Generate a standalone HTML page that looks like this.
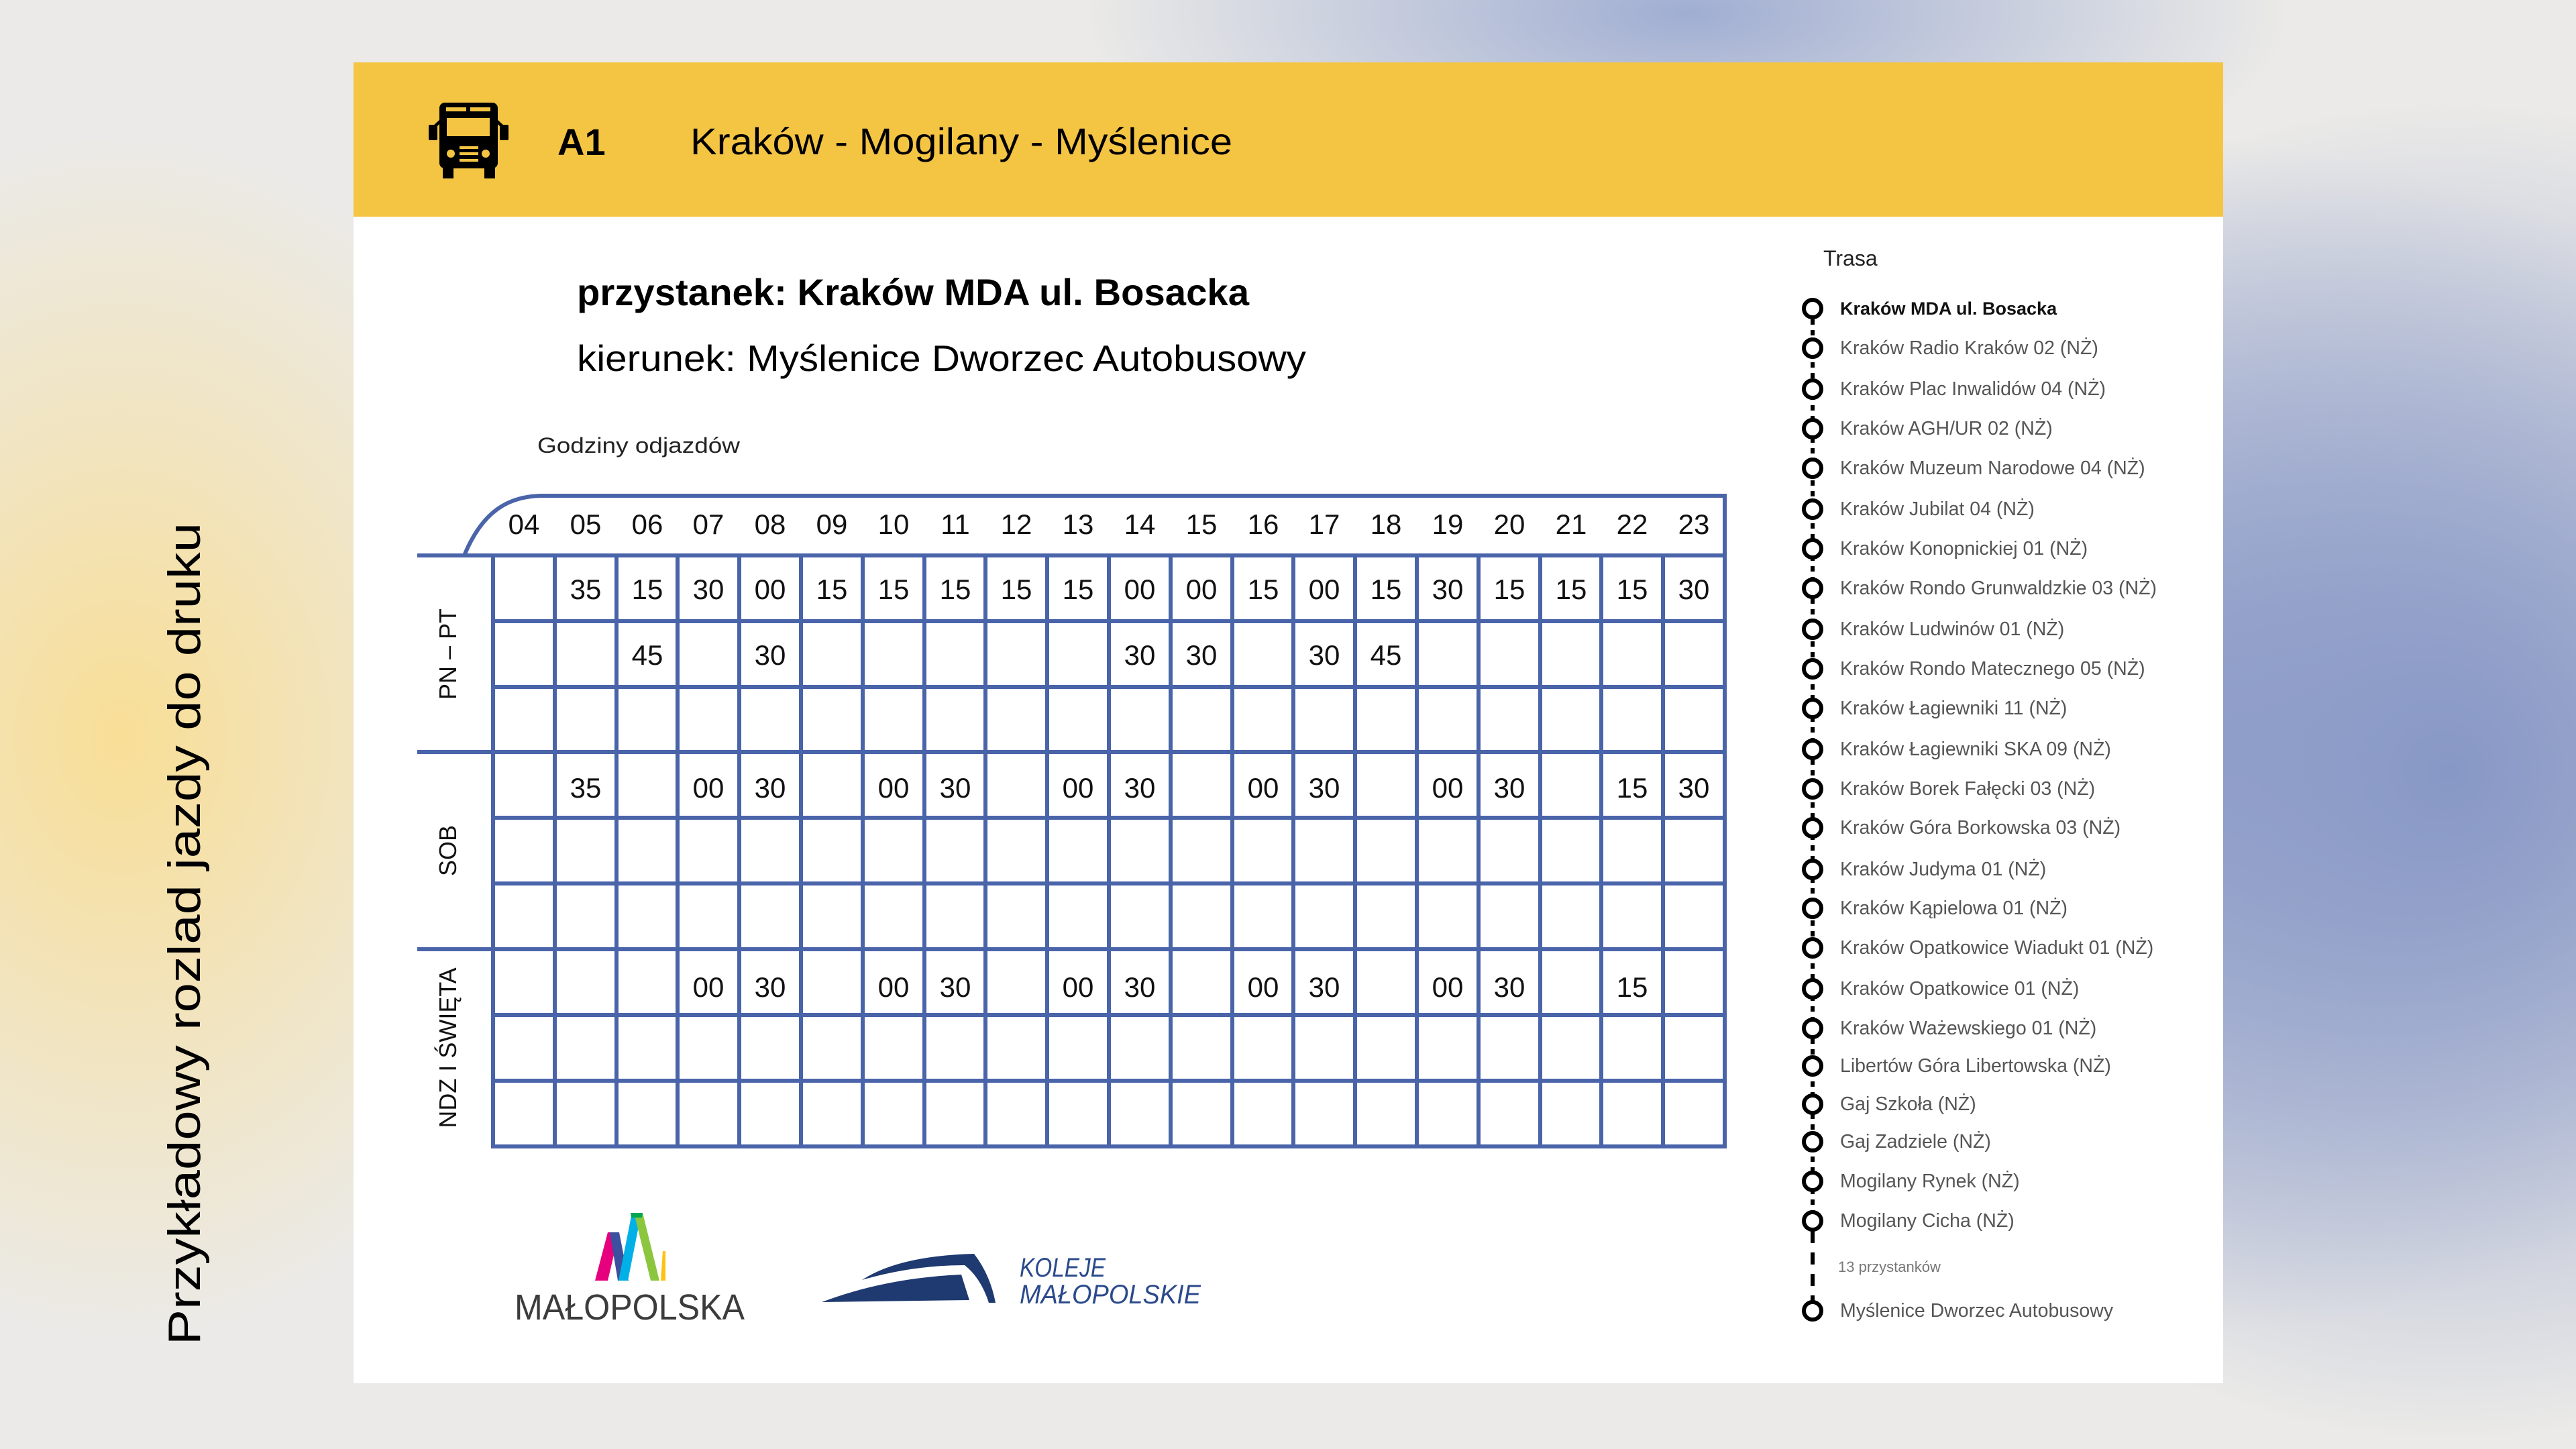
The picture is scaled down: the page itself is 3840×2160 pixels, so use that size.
<!DOCTYPE html>
<html><head><meta charset="utf-8"><style>
html,body{margin:0;padding:0}
body{width:3840px;height:2160px;overflow:hidden;position:relative;font-family:"Liberation Sans",sans-serif;
background:
radial-gradient(ellipse 700px 900px at 180px 1100px, rgba(248,222,150,1), rgba(248,222,150,0) 100%),
radial-gradient(ellipse 1000px 1000px at 3650px 1150px, rgba(136,152,198,1), rgba(136,152,198,0) 100%),
radial-gradient(ellipse 1300px 900px at 3150px 1100px, rgba(140,156,202,0.95), rgba(140,156,202,0) 100%),
radial-gradient(ellipse 900px 320px at 2515px 20px, rgba(160,174,210,1), rgba(160,174,210,0) 100%),
#ebeae8;}
svg{position:absolute;left:0;top:0}
</style></head><body>
<svg width="3840" height="2160" viewBox="0 0 3840 2160" font-family="Liberation Sans, sans-serif">
<text transform="translate(298,2005) rotate(-90)" font-size="68" fill="#000" textLength="1226" lengthAdjust="spacingAndGlyphs">Przykładowy rozlad jazdy do druku</text>
<rect x="527" y="93" width="2787" height="1969" fill="#fff"/>
<rect x="527" y="93" width="2787" height="230" fill="#f4c443"/>
<g fill="#000">
<rect x="655" y="153" width="87" height="98" rx="8"/>
<rect x="660" y="245" width="16" height="21"/>
<rect x="722" y="245" width="16" height="21"/>
<rect x="639" y="186" width="13" height="23" rx="2"/>
<rect x="745" y="186" width="13" height="23" rx="2"/>
<path d="M645 188 L658 176 L658 182 L650 190Z M752 188 L739 176 L739 182 L747 190Z"/>
</g>
<g fill="#f4c443">
<rect x="666" y="176" width="64" height="27"/>
<rect x="665" y="160" width="30" height="6"/>
<rect x="701" y="160" width="30" height="6"/>
<circle cx="672" cy="229" r="6"/><circle cx="724" cy="229" r="6"/>
<rect x="685" y="218" width="28" height="4"/>
<rect x="685" y="227" width="28" height="4"/>
<rect x="685" y="237" width="28" height="4"/>
</g>
<text x="831" y="231" font-size="56" font-weight="bold">A1</text>
<text x="1029" y="230" font-size="56" textLength="808" lengthAdjust="spacingAndGlyphs">Kraków - Mogilany - Myślenice</text>
<text x="860" y="455" font-size="56" font-weight="bold" textLength="1002" lengthAdjust="spacingAndGlyphs">przystanek: Kraków MDA ul. Bosacka</text>
<text x="860" y="553" font-size="55" textLength="1087" lengthAdjust="spacingAndGlyphs">kierunek: Myślenice Dworzec Autobusowy</text>
<text x="801" y="675" font-size="32" fill="#222" textLength="302" lengthAdjust="spacingAndGlyphs">Godziny odjazdów</text>
<g stroke="#4a64aa" stroke-width="6" fill="none">
<path d="M622 828 L2571 828 M692 828 C720 760 760 739 810 739 L2571 739 L2571 1709 L735 1709 L735 828"/>
<path d="M622 1121 H2571 M622 1415 H2571 M735 926 H2571 M735 1024 H2571 M735 1219 H2571 M735 1317 H2571 M735 1513 H2571 M735 1611 H2571"/>
<path d="M827 828V1709M919 828V1709M1010 828V1709M1102 828V1709M1194 828V1709M1286 828V1709M1378 828V1709M1469 828V1709M1561 828V1709M1653 828V1709M1745 828V1709M1837 828V1709M1928 828V1709M2020 828V1709M2112 828V1709M2204 828V1709M2296 828V1709M2387 828V1709M2479 828V1709"/>
</g>
<g font-size="42" text-anchor="middle" fill="#111">
<g transform="translate(0,796)"><text x="781" y="0">04</text><text x="873" y="0">05</text><text x="965" y="0">06</text><text x="1056" y="0">07</text><text x="1148" y="0">08</text><text x="1240" y="0">09</text><text x="1332" y="0">10</text><text x="1424" y="0">11</text><text x="1515" y="0">12</text><text x="1607" y="0">13</text><text x="1699" y="0">14</text><text x="1791" y="0">15</text><text x="1883" y="0">16</text><text x="1974" y="0">17</text><text x="2066" y="0">18</text><text x="2158" y="0">19</text><text x="2250" y="0">20</text><text x="2342" y="0">21</text><text x="2433" y="0">22</text><text x="2525" y="0">23</text></g>
<g transform="translate(0,893)"><text x="873" y="0">35</text><text x="965" y="0">15</text><text x="1056" y="0">30</text><text x="1148" y="0">00</text><text x="1240" y="0">15</text><text x="1332" y="0">15</text><text x="1424" y="0">15</text><text x="1515" y="0">15</text><text x="1607" y="0">15</text><text x="1699" y="0">00</text><text x="1791" y="0">00</text><text x="1883" y="0">15</text><text x="1974" y="0">00</text><text x="2066" y="0">15</text><text x="2158" y="0">30</text><text x="2250" y="0">15</text><text x="2342" y="0">15</text><text x="2433" y="0">15</text><text x="2525" y="0">30</text></g>
<g transform="translate(0,991)"><text x="965" y="0">45</text><text x="1148" y="0">30</text><text x="1699" y="0">30</text><text x="1791" y="0">30</text><text x="1974" y="0">30</text><text x="2066" y="0">45</text></g>
<g transform="translate(0,1189)"><text x="873" y="0">35</text><text x="1056" y="0">00</text><text x="1148" y="0">30</text><text x="1332" y="0">00</text><text x="1424" y="0">30</text><text x="1607" y="0">00</text><text x="1699" y="0">30</text><text x="1883" y="0">00</text><text x="1974" y="0">30</text><text x="2158" y="0">00</text><text x="2250" y="0">30</text><text x="2433" y="0">15</text><text x="2525" y="0">30</text></g>
<g transform="translate(0,1486)"><text x="1056" y="0">00</text><text x="1148" y="0">30</text><text x="1332" y="0">00</text><text x="1424" y="0">30</text><text x="1607" y="0">00</text><text x="1699" y="0">30</text><text x="1883" y="0">00</text><text x="1974" y="0">30</text><text x="2158" y="0">00</text><text x="2250" y="0">30</text><text x="2433" y="0">15</text></g>
</g>
<g font-size="36" text-anchor="middle" fill="#111">
<text transform="translate(680,975) rotate(-90)">PN – PT</text>
<text transform="translate(680,1268) rotate(-90)">SOB</text>
<text transform="translate(680,1562) rotate(-90)">NDZ I ŚWIĘTA</text>
</g>
<polygon points="906,1837 923,1837 906,1909 887,1909" fill="#e6007e"/>
<polygon points="909,1837 923,1837 937,1909 921,1909" fill="#3d4f9f"/>
<polygon points="942,1808 956,1808 936,1909 922,1909" fill="#00b0e6"/>
<polygon points="945,1808 958,1808 983,1909 970,1909" fill="#8cc63f"/>
<polygon points="940,1808 958,1808 957,1815 941,1815" fill="#00a651"/>
<polygon points="988,1865 992,1865 992,1909 985,1909" fill="#ffc20e"/>
<text x="767" y="1967" font-size="54" fill="#3c3c3c" textLength="343" lengthAdjust="spacingAndGlyphs">MAŁOPOLSKA</text>
<path d="M1225 1941 Q1320 1905 1433 1900 L1445 1938 Z" fill="#1f3a70"/>
<path d="M1285 1908 Q1340 1872 1452 1869 Q1476 1900 1484 1942 L1474 1942 Q1462 1905 1438 1886 Q1360 1886 1285 1908 Z" fill="#1f3a70"/>
<text x="1520" y="1903" font-size="40" font-style="italic" fill="#2b4a8c" textLength="128" lengthAdjust="spacingAndGlyphs">KOLEJE</text>
<text x="1520" y="1943" font-size="40" font-style="italic" fill="#2b4a8c" textLength="270" lengthAdjust="spacingAndGlyphs">MAŁOPOLSKIE</text>
<text x="2718" y="396" font-size="32" fill="#222">Trasa</text>
<path d="M2702 460 V1820" stroke="#000" stroke-width="6" stroke-dasharray="8 8"/>
<path d="M2702 1835 V1945" stroke="#000" stroke-width="6" stroke-dasharray="18 14"/>
<g fill="#fff" stroke="#000" stroke-width="6">
<circle cx="2702" cy="460" r="13"/><circle cx="2702" cy="519" r="13"/><circle cx="2702" cy="580" r="13"/><circle cx="2702" cy="639" r="13"/><circle cx="2702" cy="698" r="13"/><circle cx="2702" cy="759" r="13"/><circle cx="2702" cy="818" r="13"/><circle cx="2702" cy="877" r="13"/><circle cx="2702" cy="938" r="13"/><circle cx="2702" cy="997" r="13"/><circle cx="2702" cy="1056" r="13"/><circle cx="2702" cy="1117" r="13"/><circle cx="2702" cy="1176" r="13"/><circle cx="2702" cy="1234" r="13"/><circle cx="2702" cy="1296" r="13"/><circle cx="2702" cy="1354" r="13"/><circle cx="2702" cy="1413" r="13"/><circle cx="2702" cy="1474" r="13"/><circle cx="2702" cy="1533" r="13"/><circle cx="2702" cy="1589" r="13"/><circle cx="2702" cy="1646" r="13"/><circle cx="2702" cy="1702" r="13"/><circle cx="2702" cy="1761" r="13"/><circle cx="2702" cy="1820" r="13"/><circle cx="2702" cy="1954" r="13"/>
</g>
<g font-size="28.5" fill="#555">
<text x="2743" y="469" font-weight="bold" fill="#111" font-size="27">Kraków MDA ul. Bosacka</text>
<text x="2743" y="528">Kraków Radio Kraków 02 (NŻ)</text>
<text x="2743" y="589">Kraków Plac Inwalidów 04 (NŻ)</text>
<text x="2743" y="648">Kraków AGH/UR 02 (NŻ)</text>
<text x="2743" y="707">Kraków Muzeum Narodowe 04 (NŻ)</text>
<text x="2743" y="768">Kraków Jubilat 04 (NŻ)</text>
<text x="2743" y="827">Kraków Konopnickiej 01 (NŻ)</text>
<text x="2743" y="886">Kraków Rondo Grunwaldzkie 03 (NŻ)</text>
<text x="2743" y="947">Kraków Ludwinów 01 (NŻ)</text>
<text x="2743" y="1006">Kraków Rondo Matecznego 05 (NŻ)</text>
<text x="2743" y="1065">Kraków Łagiewniki 11 (NŻ)</text>
<text x="2743" y="1126">Kraków Łagiewniki SKA 09 (NŻ)</text>
<text x="2743" y="1185">Kraków Borek Fałęcki 03 (NŻ)</text>
<text x="2743" y="1243">Kraków Góra Borkowska 03 (NŻ)</text>
<text x="2743" y="1305">Kraków Judyma 01 (NŻ)</text>
<text x="2743" y="1363">Kraków Kąpielowa 01 (NŻ)</text>
<text x="2743" y="1422">Kraków Opatkowice Wiadukt 01 (NŻ)</text>
<text x="2743" y="1483">Kraków Opatkowice 01 (NŻ)</text>
<text x="2743" y="1542">Kraków Ważewskiego 01 (NŻ)</text>
<text x="2743" y="1598">Libertów Góra Libertowska (NŻ)</text>
<text x="2743" y="1655">Gaj Szkoła (NŻ)</text>
<text x="2743" y="1711">Gaj Zadziele (NŻ)</text>
<text x="2743" y="1770">Mogilany Rynek (NŻ)</text>
<text x="2743" y="1829">Mogilany Cicha (NŻ)</text>
<text x="2740" y="1896" font-size="22" fill="#777">13 przystanków</text>
<text x="2743" y="1963">Myślenice Dworzec Autobusowy</text>
</g>
</svg>
</body></html>
